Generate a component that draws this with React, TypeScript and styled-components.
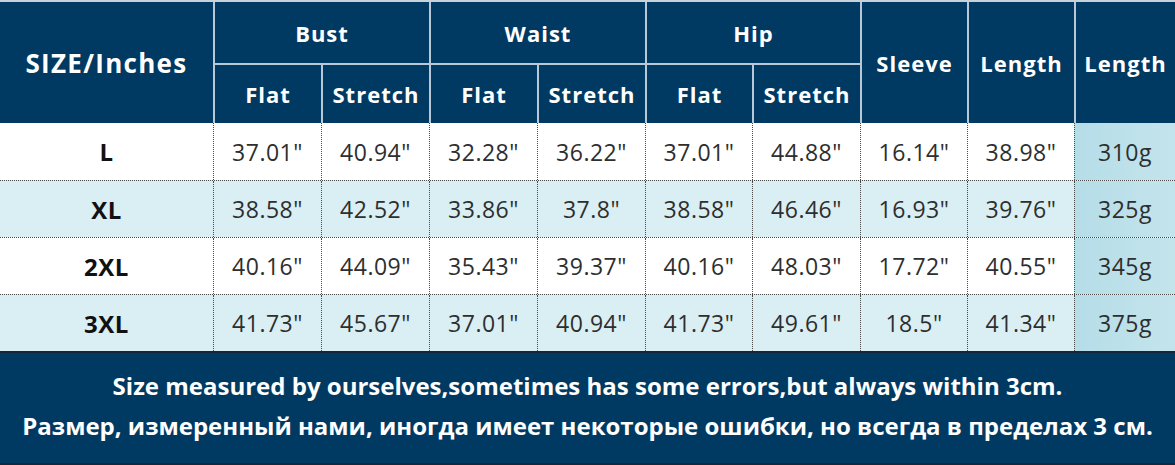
import styled, { createGlobalStyle } from "styled-components";

const GlobalStyle = createGlobalStyle`
  html, body {
    margin: 0;
    padding: 0;
    background: #ffffff;
  }
  body {
    font-family: "Open Sans", "Noto Sans", sans-serif;
  }
`;

const COLUMNS = "213px 108px 108px 108px 108px 107px 108px 107px 107px 101px";

const Chart = styled.div`
  width: 1175px;
  height: 465px;
  display: flex;
  flex-direction: column;
`;

const Header = styled.div`
  display: grid;
  grid-template-columns: ${COLUMNS};
  grid-template-rows: 61px 60px;
  border-top: 2px solid #c6d2dc;
  background: #003a62;
`;

const HeadCell = styled.div<{ $col: string; $row: string; $big?: boolean }>`
  grid-column: ${(p) => p.$col};
  grid-row: ${(p) => p.$row};
  display: flex;
  align-items: center;
  justify-content: center;
  color: #ffffff;
  font-weight: 700;
  font-size: ${(p) => (p.$big ? 26 : 22)}px;
  letter-spacing: ${(p) => (p.$big ? 1.3 : 1)}px;
  box-sizing: border-box;
  border-left: 2px solid #b9c8d6;
  border-top: ${(p) => (p.$row === "2" ? "2px solid #b9c8d6" : "none")};
  &:first-child {
    border-left: none;
  }
`;

const Row = styled.div<{ $tint: boolean }>`
  display: grid;
  grid-template-columns: ${COLUMNS};
  height: 57px;
  box-sizing: border-box;
  border-top: 1px dotted #4a4a4a;
  background: ${(p) => (p.$tint ? "#daeff4" : "#ffffff")};
  &:first-of-type {
    border-top: none;
  }
`;

const Cell = styled.div`
  display: flex;
  align-items: center;
  justify-content: center;
  box-sizing: border-box;
  border-left: 1px dotted #4a4a4a;
  font-size: 23px;
  letter-spacing: 0.5px;
  color: #2e2e2e;
  font-weight: 400;
  &:first-child {
    border-left: none;
  }
`;

const SizeCell = styled(Cell)`
  font-weight: 700;
  font-size: 24px;
  color: #111111;
`;

const WeightCell = styled(Cell)`
  background: linear-gradient(90deg, #b5dde8 0%, #c4e4ec 100%);
`;

const Body = styled.div`
  display: flex;
  flex-direction: column;
`;

const Footer = styled.div`
  flex: 1;
  display: flex;
  flex-direction: column;
  align-items: center;
  justify-content: center;
  background: #003a62;
  border-top: 2px solid #15263a;
  border-bottom: 2px solid #15263a;
  color: #ffffff;
  font-weight: 700;
  font-size: 24px;
  line-height: 40px;
  padding-bottom: 4px;
`;

const rows = [
  { size: "L", values: ['37.01"', '40.94"', '32.28"', '36.22"', '37.01"', '44.88"', '16.14"', '38.98"'], weight: "310g" },
  { size: "XL", values: ['38.58"', '42.52"', '33.86"', '37.8"', '38.58"', '46.46"', '16.93"', '39.76"'], weight: "325g" },
  { size: "2XL", values: ['40.16"', '44.09"', '35.43"', '39.37"', '40.16"', '48.03"', '17.72"', '40.55"'], weight: "345g" },
  { size: "3XL", values: ['41.73"', '45.67"', '37.01"', '40.94"', '41.73"', '49.61"', '18.5"', '41.34"'], weight: "375g" },
];

const App = () => {
  return (
    <>
      <GlobalStyle />
      <Chart>
        <Header>
          <HeadCell $col="1" $row="1 / span 2" $big>SIZE/Inches</HeadCell>
          <HeadCell $col="2 / span 2" $row="1">Bust</HeadCell>
          <HeadCell $col="4 / span 2" $row="1">Waist</HeadCell>
          <HeadCell $col="6 / span 2" $row="1">Hip</HeadCell>
          <HeadCell $col="8" $row="1 / span 2">Sleeve</HeadCell>
          <HeadCell $col="9" $row="1 / span 2">Length</HeadCell>
          <HeadCell $col="10" $row="1 / span 2">Length</HeadCell>
          <HeadCell $col="2" $row="2">Flat</HeadCell>
          <HeadCell $col="3" $row="2">Stretch</HeadCell>
          <HeadCell $col="4" $row="2">Flat</HeadCell>
          <HeadCell $col="5" $row="2">Stretch</HeadCell>
          <HeadCell $col="6" $row="2">Flat</HeadCell>
          <HeadCell $col="7" $row="2">Stretch</HeadCell>
        </Header>
        <Body>
          {rows.map((r, i) => (
            <Row key={r.size} $tint={i % 2 === 1}>
              <SizeCell>{r.size}</SizeCell>
              {r.values.map((v, j) => (
                <Cell key={j}>{v}</Cell>
              ))}
              <WeightCell>{r.weight}</WeightCell>
            </Row>
          ))}
        </Body>
        <Footer>
          <div>Size measured by ourselves,sometimes has some errors,but always within 3cm.</div>
          <div>Размер, измеренный нами, иногда имеет некоторые ошибки, но всегда в пределах 3 см.</div>
        </Footer>
      </Chart>
    </>
  );
};

export default App;
